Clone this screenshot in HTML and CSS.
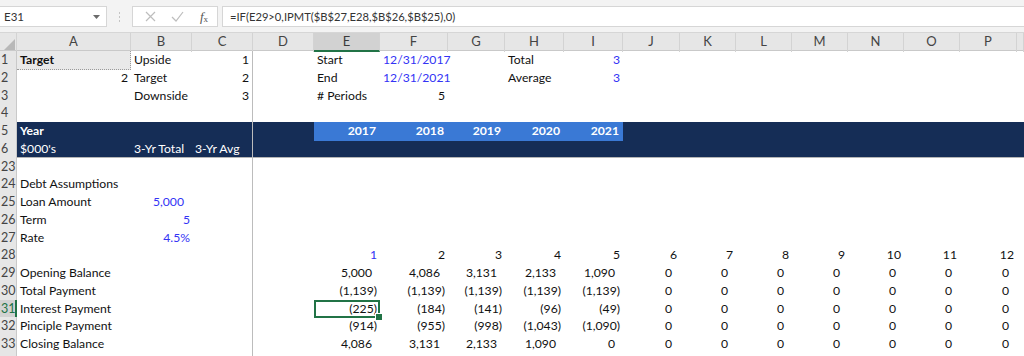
FILE: index.html
```html
<!DOCTYPE html>
<html lang="en">
<head>
  <meta charset="UTF-8" />
  <title>Debt Schedule</title>
  <link rel="stylesheet" href="styles.css">
</head>
<body>
  <div class="formula-bar">
    <div class="name-box">
      <span>E31</span>
      <svg class="caret" width="7" height="4" viewBox="0 0 7 4"><path d="M0 0h7L3.5 4z" fill="#6b6b6b"/></svg>
    </div>
    <div class="grip"><i></i><i></i><i></i></div>
    <div class="fx-buttons">
      <svg width="11" height="11" viewBox="0 0 11 11"><path d="M1 1l9 9M10 1l-9 9" stroke="#bdbdbd" stroke-width="1.2" fill="none"/></svg>
      <svg width="13" height="11" viewBox="0 0 13 11"><path d="M1 6l4 4 7-9" stroke="#bdbdbd" stroke-width="1.2" fill="none"/></svg>
      <span class="fx"><i>f</i><sub>x</sub></span>
    </div>
    <div class="formula">=IF(E29&gt;0,IPMT($B$27,E28,$B$26,$B$25),0)</div>
  </div>

  <div class="sheet">
    <div class="row heads">
      <div class="corner"><svg width="11" height="11" viewBox="0 0 11 11"><path d="M11 0v11H0z" fill="#b8b8b8"/></svg></div>
      <div>A</div><div>B</div><div>C</div><div>D</div><div class="sel">E</div><div>F</div><div>G</div><div>H</div>
      <div>I</div><div>J</div><div>K</div><div>L</div><div>M</div><div>N</div><div>O</div><div>P</div><div></div>
    </div>

    <div class="row">
      <div class="rh">1</div>
      <div class="b target-cell">Target</div><div>Upside</div><div class="r frz">1</div><div></div>
      <div>Start</div><div class="r in">12/31/2017</div><div></div><div>Total</div><div class="r in">3</div>
    </div>
    <div class="row">
      <div class="rh">2</div>
      <div class="r">2</div><div>Target</div><div class="r frz">2</div><div></div>
      <div>End</div><div class="r in">12/31/2021</div><div></div><div>Average</div><div class="r in">3</div>
    </div>
    <div class="row">
      <div class="rh">3</div>
      <div></div><div>Downside</div><div class="r frz">3</div><div></div>
      <div># Periods</div><div class="r">5</div>
    </div>
    <div class="row">
      <div class="rh">4</div>
      <div></div><div></div><div class="frz"></div>
    </div>
    <div class="row band">
      <div class="rh">5</div>
      <div class="b">Year</div><div></div><div class="frz"></div><div></div>
      <div class="r yr">2017</div><div class="r yr">2018</div><div class="r yr">2019</div><div class="r yr">2020</div><div class="r yr">2021</div>
    </div>
    <div class="row band last-frozen">
      <div class="rh">6</div>
      <div>$000's</div><div>3-Yr Total</div><div class="frz">3-Yr Avg</div>
    </div>

    <div class="row">
      <div class="rh">23</div>
      <div></div><div></div><div class="frz"></div>
    </div>
    <div class="row">
      <div class="rh">24</div>
      <div>Debt Assumptions</div><div></div><div class="frz"></div>
    </div>
    <div class="row">
      <div class="rh">25</div>
      <div>Loan Amount</div><div class="r in pos">5,000</div><div class="frz"></div>
    </div>
    <div class="row">
      <div class="rh">26</div>
      <div>Term</div><div class="r in tight">5</div><div class="frz"></div>
    </div>
    <div class="row">
      <div class="rh">27</div>
      <div>Rate</div><div class="r in tight">4.5%</div><div class="frz"></div>
    </div>
    <div class="row">
      <div class="rh">28</div>
      <div></div><div></div><div class="frz"></div><div></div>
      <div class="r in">1</div><div class="r">2</div><div class="r">3</div><div class="r">4</div><div class="r">5</div>
      <div class="r">6</div><div class="r">7</div><div class="r">8</div><div class="r">9</div><div class="r">10</div><div class="r">11</div><div class="r">12</div>
    </div>
    <div class="row">
      <div class="rh">29</div>
      <div>Opening Balance</div><div></div><div class="frz"></div><div></div>
      <div class="r pos">5,000</div><div class="r pos">4,086</div><div class="r pos">3,131</div><div class="r pos">2,133</div><div class="r pos">1,090</div>
      <div class="r pos">0</div><div class="r pos">0</div><div class="r pos">0</div><div class="r pos">0</div><div class="r pos">0</div><div class="r pos">0</div><div class="r pos">0</div>
    </div>
    <div class="row">
      <div class="rh">30</div>
      <div>Total Payment</div><div></div><div class="frz"></div><div></div>
      <div class="r">(1,139)</div><div class="r">(1,139)</div><div class="r">(1,139)</div><div class="r">(1,139)</div><div class="r">(1,139)</div>
      <div class="r pos">0</div><div class="r pos">0</div><div class="r pos">0</div><div class="r pos">0</div><div class="r pos">0</div><div class="r pos">0</div><div class="r pos">0</div>
    </div>
    <div class="row">
      <div class="rh sel">31</div>
      <div>Interest Payment</div><div></div><div class="frz"></div><div></div>
      <div class="r active">(225)</div><div class="r">(184)</div><div class="r">(141)</div><div class="r">(96)</div><div class="r">(49)</div>
      <div class="r pos">0</div><div class="r pos">0</div><div class="r pos">0</div><div class="r pos">0</div><div class="r pos">0</div><div class="r pos">0</div><div class="r pos">0</div>
    </div>
    <div class="row">
      <div class="rh">32</div>
      <div>Pinciple Payment</div><div></div><div class="frz"></div><div></div>
      <div class="r">(914)</div><div class="r">(955)</div><div class="r">(998)</div><div class="r">(1,043)</div><div class="r">(1,090)</div>
      <div class="r pos">0</div><div class="r pos">0</div><div class="r pos">0</div><div class="r pos">0</div><div class="r pos">0</div><div class="r pos">0</div><div class="r pos">0</div>
    </div>
    <div class="row">
      <div class="rh">33</div>
      <div>Closing Balance</div><div></div><div class="frz"></div><div></div>
      <div class="r pos">4,086</div><div class="r pos">3,131</div><div class="r pos">2,133</div><div class="r pos">1,090</div><div class="r pos">0</div>
      <div class="r pos">0</div><div class="r pos">0</div><div class="r pos">0</div><div class="r pos">0</div><div class="r pos">0</div><div class="r pos">0</div><div class="r pos">0</div>
    </div>
    <div class="row">
      <div class="rh"></div>
      <div></div><div></div><div class="frz"></div>
    </div>
  </div>
</body>
</html>
```

FILE: styles.css
```css
* {
    margin: 0;
    padding: 0;
    box-sizing: border-box;
}

body {
    width: 1024px;
    height: 356px;
    overflow: hidden;
    background: #fff;
    font-family: Lato, 'Open Sans', sans-serif;
    color: #111;
}

/* formula bar */
.formula-bar {
    height: 33px;
    background: #f3f3f3;
    display: flex;
    align-items: flex-start;
    padding-top: 6px;
    border-bottom: 1px solid #d6d6d6;
}

.name-box {
    width: 107px;
    height: 21px;
    background: #fff;
    border: 1px solid #d6d6d6;
    border-left: none;
    display: flex;
    align-items: center;
    justify-content: space-between;
    padding: 0 6px 0 4px;
    font-size: 11.5px;
    color: #333;
}

.grip {
    width: 25px;
    height: 21px;
    display: flex;
    flex-direction: column;
    align-items: center;
    justify-content: center;
    gap: 2px;
}

.grip i {
    width: 1px;
    height: 2px;
    background: #c4c4c4;
}

.fx-buttons {
    width: 86px;
    height: 21px;
    background: #fff;
    border: 1px solid #d6d6d6;
    display: flex;
    align-items: center;
    justify-content: space-between;
    padding: 0 9px 0 12px;
}

.fx {
    font-family: 'Liberation Serif', serif;
    font-size: 13px;
    color: #555;
}

.fx sub {
    font-size: 9px;
    vertical-align: -1px;
}

.formula {
    flex: 1;
    height: 21px;
    margin-left: 4px;
    background: #fff;
    border: 1px solid #d6d6d6;
    border-right: none;
    padding-left: 7px;
    font-size: 11.2px;
    line-height: 19px;
    color: #333;
}

/* grid */
.row {
    display: grid;
    grid-template-columns: 17px 114px 61px 61px 61px 66px 68px 57px 59px 59px 57px 56px 56px 56px 56px 56px 57px 1fr;
    height: 17.75px;
    font-size: 12.2px;
    line-height: 17.75px;
}

.row > div {
    padding: 0 3px;
    white-space: nowrap;
}

.heads {
    height: 18px;
    line-height: 17px;
    background: #e6e6e6;
    border-bottom: 1px solid #c9c9c9;
    color: #444;
    font-size: 13px;
}

.heads > div {
    text-align: center;
    border-right: 1px solid #d3d3d3;
}

.heads .sel {
    background: #d2d2d2;
    border-bottom: 2px solid #217346;
    color: #3a3a3a;
}

.corner {
    display: flex;
    align-items: flex-end;
    justify-content: flex-end;
    padding: 0 1px 2px 0 !important;
}

.rh {
    background: #e6e6e6;
    color: #444;
    border-right: 1px solid #c9c9c9;
    border-bottom: 1px solid #dcdcdc;
    padding: 0 0 0 1px !important;
    font-size: 12.5px;
}

.rh.sel {
    background: #d2d2d2;
    color: #217346;
    border-right: 2px solid #217346;
}

.r {
    text-align: right;
}

.b {
    font-weight: bold;
}

.in {
    color: #3333f5;
}

.pos {
    padding-right: 8px !important;
}

.tight {
    padding-right: 2px !important;
}

.frz {
    border-right: 1px solid #bcbcbc;
}

.target-cell {
    background: #e9e9e9;
    border-right: 1px dotted #9a9a9a;
    border-bottom: 1px dotted #9a9a9a;
}

.band {
    background: #152d56;
    color: #fff;
}

.band .yr {
    background: #3a79d5;
    font-weight: bold;
    padding-right: 4px;
}

.last-frozen {
    border-bottom: 1px solid #b5b5b5;
}

.active {
    position: relative;
    box-shadow: inset 0 0 0 2px #217346;
}

.active::after {
    content: "";
    position: absolute;
    right: -3px;
    bottom: -3px;
    width: 6px;
    height: 6px;
    background: #217346;
    border: 1px solid #fff;
}
```
